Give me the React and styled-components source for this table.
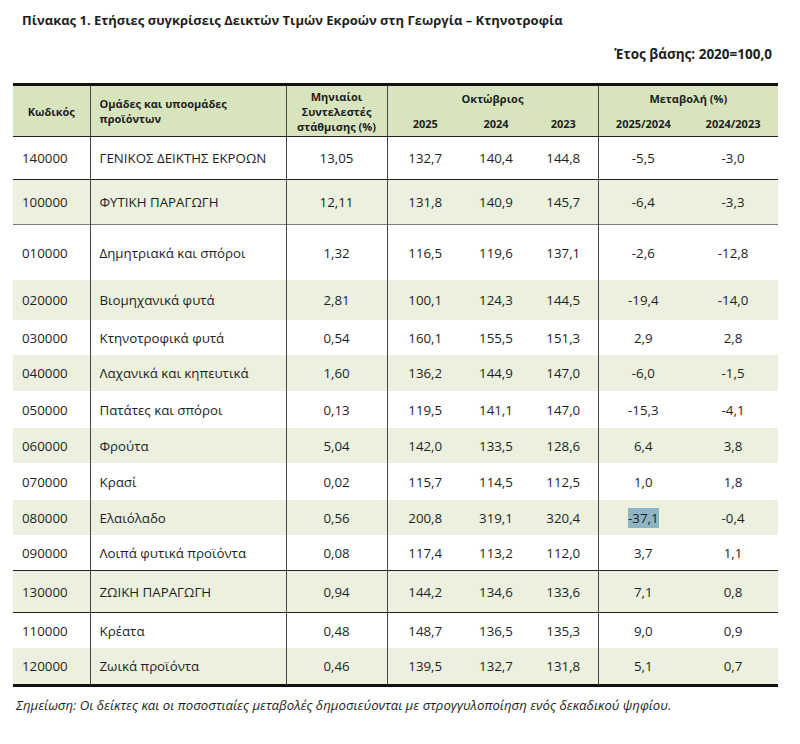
import React from "react";
import styled, { createGlobalStyle } from "styled-components";

const GlobalStyle = createGlobalStyle`
  body {
    margin: 0;
    background: #ffffff;
    font-family: "Open Sans", "Noto Sans", sans-serif;
    color: #1e1e1e;
  }
`;

const Page = styled.div`
  width: 800px;
  height: 744px;
  padding: 11px 0 0 13px;
  box-sizing: border-box;
`;

const Title = styled.h1`
  margin: 0 0 0 9px;
  font-size: 13px;
  font-weight: 700;
  line-height: 18px;
`;

const BaseYear = styled.div`
  margin: 16px 28px 0 0;
  text-align: right;
  font-size: 13.5px;
  font-weight: 700;
  line-height: 18px;
`;

const Table = styled.table`
  margin-top: 20px;
  width: 765px;
  border-collapse: collapse;
  table-layout: fixed;
  font-size: 13.3px;
  border-top: 3px solid #111;
  border-bottom: 3px solid #111;
`;

const HeadCell = styled.th`
  background: #d7e4bd;
  font-weight: 700;
  font-size: 11px;
  line-height: 15px;
  padding: 0 ${(p) => (p.$left ? "9px" : "2px")};
  text-align: ${(p) => (p.$left ? "left" : "center")};
  vertical-align: middle;
  height: ${(p) => p.$h || 24}px;
  border-right: ${(p) => (p.$divider ? "1px solid #444" : "none")};
  border-bottom: ${(p) => (p.$bottom ? "1px solid #222" : "none")};
`;

const Row = styled.tr`
  background: ${(p) => (p.$shaded ? "#ebf1de" : "#ffffff")};
  border-bottom: ${(p) =>
    p.$line === "dark" ? "1px solid #222" : p.$line === "grey" ? "1px solid #7a7a7a" : "none"};
`;

const Cell = styled.td`
  height: ${(p) => p.$h}px;
  padding: 0 ${(p) => (p.$left ? "9px" : "2px")};
  text-align: ${(p) => (p.$left ? "left" : "center")};
  vertical-align: middle;
  white-space: nowrap;
  border-right: ${(p) => (p.$divider ? "1px solid #444" : "none")};
`;

const Marked = styled.span`
  background: #8fb4c6;
  padding: 1px 0;
`;

const Note = styled.p`
  margin: 9px 0 0 3px;
  font-size: 13.2px;
  font-style: italic;
  line-height: 18px;
`;

const rows = [
  { code: "140000", name: "ΓΕΝΙΚΟΣ ΔΕΙΚΤΗΣ ΕΚΡΟΩΝ", w: "13,05", v: ["132,7", "140,4", "144,8"], c: ["-5,5", "-3,0"], h: 42, line: "dark" },
  { code: "100000", name: "ΦΥΤΙΚΗ ΠΑΡΑΓΩΓΗ", w: "12,11", v: ["131,8", "140,9", "145,7"], c: ["-6,4", "-3,3"], h: 44, shaded: true, line: "grey" },
  { code: "010000", name: "Δημητριακά και σπόροι", w: "1,32", v: ["116,5", "119,6", "137,1"], c: ["-2,6", "-12,8"], h: 55 },
  { code: "020000", name: "Βιομηχανικά φυτά", w: "2,81", v: ["100,1", "124,3", "144,5"], c: ["-19,4", "-14,0"], h: 40, shaded: true },
  { code: "030000", name: "Κτηνοτροφικά φυτά", w: "0,54", v: ["160,1", "155,5", "151,3"], c: ["2,9", "2,8"], h: 35 },
  { code: "040000", name: "Λαχανικά και κηπευτικά", w: "1,60", v: ["136,2", "144,9", "147,0"], c: ["-6,0", "-1,5"], h: 36, shaded: true },
  { code: "050000", name: "Πατάτες και σπόροι", w: "0,13", v: ["119,5", "141,1", "147,0"], c: ["-15,3", "-4,1"], h: 37 },
  { code: "060000", name: "Φρούτα", w: "5,04", v: ["142,0", "133,5", "128,6"], c: ["6,4", "3,8"], h: 35, shaded: true },
  { code: "070000", name: "Κρασί", w: "0,02", v: ["115,7", "114,5", "112,5"], c: ["1,0", "1,8"], h: 37 },
  { code: "080000", name: "Ελαιόλαδο", w: "0,56", v: ["200,8", "319,1", "320,4"], c: ["-37,1", "-0,4"], h: 35, shaded: true, mark: true },
  { code: "090000", name: "Λοιπά φυτικά προϊόντα", w: "0,08", v: ["117,4", "113,2", "112,0"], c: ["3,7", "1,1"], h: 35, line: "dark" },
  { code: "130000", name: "ΖΩΙΚΗ ΠΑΡΑΓΩΓΗ", w: "0,94", v: ["144,2", "134,6", "133,6"], c: ["7,1", "0,8"], h: 41, shaded: true, line: "dark" },
  { code: "110000", name: "Κρέατα", w: "0,48", v: ["148,7", "136,5", "135,3"], c: ["9,0", "0,9"], h: 35 },
  { code: "120000", name: "Ζωικά προϊόντα", w: "0,46", v: ["139,5", "132,7", "131,8"], c: ["5,1", "0,7"], h: 36, shaded: true },
];

const colWidths = [77, 196, 101, 76, 66, 69, 90, 90];

export default function App() {
  return (
    <Page>
      <GlobalStyle />
      <Title>Πίνακας 1. Ετήσιες συγκρίσεις Δεικτών Τιμών Εκροών στη Γεωργία – Κτηνοτροφία</Title>
      <BaseYear>Έτος βάσης: 2020=100,0</BaseYear>
      <Table>
        <colgroup>
          {colWidths.map((w, i) => (
            <col key={i} style={{ width: w }} />
          ))}
        </colgroup>
        <thead>
          <tr>
            <HeadCell rowSpan={2} $divider $bottom>Κωδικός</HeadCell>
            <HeadCell rowSpan={2} $left $divider $bottom>
              Ομάδες και υποομάδες
              <br />
              προϊόντων
            </HeadCell>
            <HeadCell rowSpan={2} $divider $bottom>
              Μηνιαίοι
              <br />
              Συντελεστές
              <br />
              στάθμισης (%)
            </HeadCell>
            <HeadCell colSpan={3} $divider $h={25}>Οκτώβριος</HeadCell>
            <HeadCell colSpan={2} $h={25}>Μεταβολή (%)</HeadCell>
          </tr>
          <tr>
            <HeadCell $bottom $h={25}>2025</HeadCell>
            <HeadCell $bottom $h={25}>2024</HeadCell>
            <HeadCell $bottom $divider $h={25}>2023</HeadCell>
            <HeadCell $bottom $h={25}>2025/2024</HeadCell>
            <HeadCell $bottom $h={25}>2024/2023</HeadCell>
          </tr>
        </thead>
        <tbody>
          {rows.map((r) => (
            <Row key={r.code} $shaded={r.shaded} $line={r.line}>
              <Cell $h={r.h} $left $divider>{r.code}</Cell>
              <Cell $h={r.h} $left $divider>{r.name}</Cell>
              <Cell $h={r.h} $divider>{r.w}</Cell>
              <Cell $h={r.h}>{r.v[0]}</Cell>
              <Cell $h={r.h}>{r.v[1]}</Cell>
              <Cell $h={r.h} $divider>{r.v[2]}</Cell>
              <Cell $h={r.h}>{r.mark ? <Marked>{r.c[0]}</Marked> : r.c[0]}</Cell>
              <Cell $h={r.h}>{r.c[1]}</Cell>
            </Row>
          ))}
        </tbody>
      </Table>
      <Note>
        Σημείωση: Οι δείκτες και οι ποσοστιαίες μεταβολές δημοσιεύονται με στρογγυλοποίηση ενός δεκαδικού ψηφίου.
      </Note>
    </Page>
  );
}
